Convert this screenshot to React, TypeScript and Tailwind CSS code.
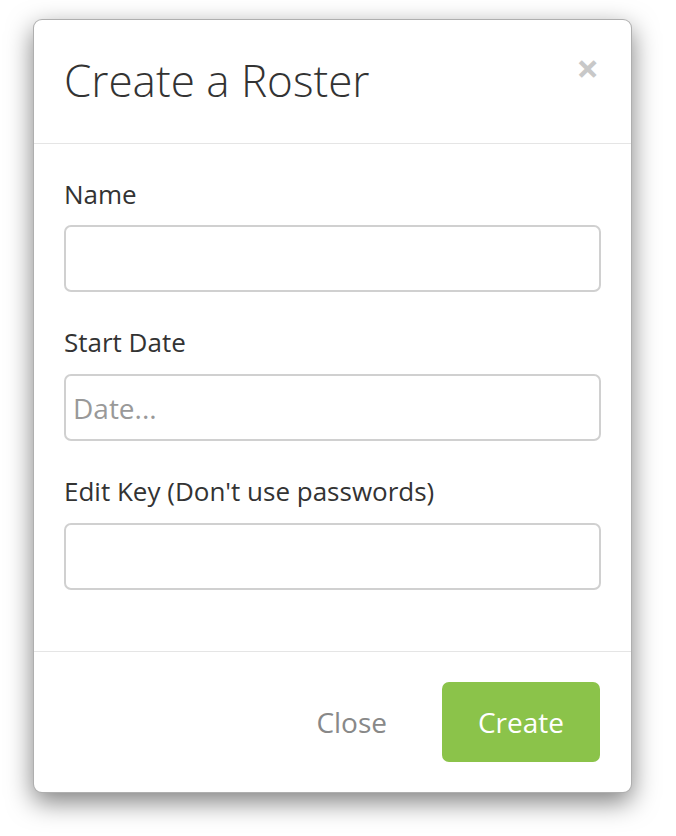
import React from "react";

export default function App() {
  return (
    <div className="min-h-screen bg-white pt-[19px] pl-[33px]" style={{ fontFamily: '"Open Sans", "Liberation Sans", sans-serif' }}>
      <div className="w-[599px] rounded-[9px] border border-[#7a7a7a]/60 bg-white shadow-[0_9px_26px_rgba(0,0,0,0.5)]">
        <div className="relative flex h-[124px] items-center border-b border-[#e5e5e5] px-[30px]">
          <h1 className="text-[44px] font-light text-[#333] leading-none pb-[4px]">Create a Roster</h1>
          <button className="absolute right-[32px] top-[28px] text-[40px] font-bold leading-none text-[#c8c8c8]">×</button>
        </div>
        <div className="flex flex-col px-[30px] pt-[33px] pb-[61px]">
          <label className="text-[26px] text-[#333] leading-[34px]">Name</label>
          <input className="mt-[14px] h-[67px] w-full rounded-[7px] border-2 border-[#d0d0d0] px-[7px] text-[24px] outline-none" />
          <label className="mt-[33px] text-[26px] text-[#333] leading-[34px]">Start Date</label>
          <input placeholder="Date..." className="mt-[15px] h-[67px] w-full rounded-[7px] border-2 border-[#d0d0d0] px-[7px] text-[28px] text-[#333] placeholder:text-[#999] outline-none" />
          <label className="mt-[33px] text-[26px] text-[#333] leading-[34px]">Edit Key (Don't use passwords)</label>
          <input className="mt-[15px] h-[67px] w-full rounded-[7px] border-2 border-[#d0d0d0] px-[7px] text-[24px] outline-none" />
        </div>
        <div className="flex items-center justify-end gap-[55px] border-t border-[#e5e5e5] pl-[30px] pr-[31px] pt-[30px] pb-[30px]">
          <button className="text-[28px] text-[#888]">Close</button>
          <button className="h-[80px] w-[158px] rounded-[7px] bg-[#8bc34a] text-[28px] text-white">Create</button>
        </div>
      </div>
    </div>
  );
}
